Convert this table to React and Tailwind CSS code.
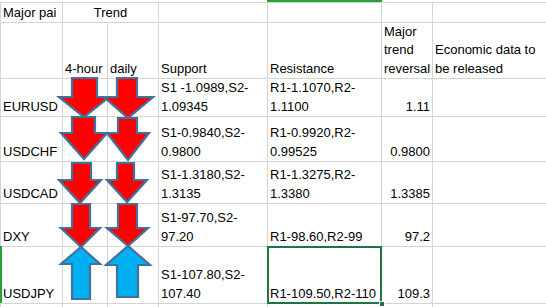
import React from 'react';

const RED = '#FF0000';
const BLUE = '#00B0F0';
const EDGE = '#41719C';

// block arrows drawn over the sheet, as in the workbook
const arrows = [
    { dir: 'down', sl: 72, sr: 97, end: 78, hy: 97, hl: 59, hr: 109, tx: 84, ty: 117 },
    { dir: 'down', sl: 72, sr: 95, end: 117, hy: 133, hl: 61, hr: 107, tx: 84, ty: 159 },
    { dir: 'down', sl: 72, sr: 91, end: 163, hy: 180, hl: 59, hr: 101, tx: 80, ty: 203 },
    { dir: 'down', sl: 72, sr: 90, end: 204, hy: 228, hl: 61, hr: 100, tx: 81, ty: 247 },
    { dir: 'up', sl: 72, sr: 90, end: 299, hy: 264, hl: 61, hr: 100, tx: 81, ty: 247 },
    { dir: 'down', sl: 117, sr: 137, end: 78, hy: 97, hl: 104, hr: 153, tx: 128, ty: 118 },
    { dir: 'down', sl: 118, sr: 137, end: 118, hy: 133, hl: 107, hr: 149, tx: 128, ty: 160 },
    { dir: 'down', sl: 117, sr: 134, end: 163, hy: 180, hl: 107, hr: 147, tx: 127, ty: 202 },
    { dir: 'down', sl: 118, sr: 137, end: 204, hy: 228, hl: 107, hr: 148, tx: 128, ty: 246 },
    { dir: 'up', sl: 117, sr: 138, end: 297, hy: 265, hl: 106, hr: 150, tx: 128, ty: 246 },
];

const rows = [
    { pair: 'EURUSD', s: ['S1 -1.0989,S2-', '1.09345'], r: ['R1-1.1070,R2-', '1.1100'], rev: '1.11' },
    { pair: 'USDCHF', s: ['S1-0.9840,S2-', '0.9800'], r: ['R1-0.9920,R2-', '0.99525'], rev: '0.9800' },
    { pair: 'USDCAD', s: ['S1-1.3180,S2-', '1.3135'], r: ['R1-1.3275,R2-', '1.3380'], rev: '1.3385' },
    { pair: 'DXY', s: ['S1-97.70,S2-', '97.20'], r: ['R1-98.60,R2-99'], rev: '97.2' },
    { pair: 'USDJPY', s: ['S1-107.80,S2-', '107.40'], r: ['R1-109.50,R2-110'], rev: '109.3', selected: true },
];

function Cell({ children, className = '' }) {
    return (
        <div className={`bg-white flex flex-col justify-end px-[2px] whitespace-nowrap overflow-hidden ${className}`}>
            {children}
        </div>
    );
}

function Arrow({ a }) {
    const fill = a.dir === 'down' ? RED : BLUE;
    const pts = [
        [a.sl, a.end], [a.sr, a.end], [a.sr, a.hy], [a.hr, a.hy],
        [a.tx, a.ty], [a.hl, a.hy], [a.sl, a.hy],
    ].map(p => p.join(',')).join(' ');
    return <polygon points={pts} fill={fill} stroke={EDGE} strokeWidth="2.2" strokeLinejoin="miter" />;
}

export default function App() {
    return (
        <div className="relative w-[546px] h-[307px] overflow-hidden bg-white pt-[2px] text-[13px] leading-[19px] text-black font-['Liberation_Sans',Arial,sans-serif]">
            <div className="grid grid-cols-[61px_44px_50px_108px_113px_50px_140px] grid-rows-[19px_55px_37px_44px_41px_42px_56px_30px] gap-px bg-[#d4d4d4] pt-px pl-px w-max">
                {/* header row 1 */}
                <Cell>Major pai</Cell>
                <Cell className="col-span-2 items-center">Trend</Cell>
                <Cell />
                <Cell />
                <Cell />
                <Cell />

                {/* header row 2 */}
                <Cell />
                <Cell>4-hour</Cell>
                <Cell>daily</Cell>
                <Cell>Support</Cell>
                <Cell>Resistance</Cell>
                <Cell className="leading-[18.5px]">
                    <span>Major</span>
                    <span>trend</span>
                    <span>reversal</span>
                </Cell>
                <Cell className="leading-[18.5px]">
                    <span>Economic data to</span>
                    <span>be released</span>
                </Cell>

                {rows.map(row => (
                    <React.Fragment key={row.pair}>
                        <Cell>{row.pair}</Cell>
                        <Cell />
                        <Cell />
                        <Cell>
                            {row.s.map(t => <span key={t}>{t}</span>)}
                        </Cell>
                        <Cell className="relative overflow-visible">
                            {row.r.map(t => <span key={t}>{t}</span>)}
                            {row.selected && (
                                <>
                                    <div className="absolute -left-px -top-px -right-px -bottom-px border-2 border-[#217346]" />
                                    <div className="absolute -right-[4px] -bottom-[4px] w-[6px] h-[6px] bg-[#217346] border border-white" />
                                </>
                            )}
                        </Cell>
                        <Cell className="items-end">{row.rev}</Cell>
                        <Cell />
                    </React.Fragment>
                ))}

                {/* next empty row */}
                <Cell />
                <Cell />
                <Cell />
                <Cell />
                <Cell />
                <Cell />
                <Cell />
            </div>

            {/* column / row selection highlights */}
            <div className="absolute top-0 left-[267px] w-[115px] h-[2px] bg-[#21a33a]" />
            <div className="absolute left-0 top-[246px] w-[2px] h-[57px] bg-[#21a33a]" />

            <svg className="absolute inset-0 pointer-events-none" width="546" height="307" viewBox="0 0 546 307">
                {arrows.map((a, i) => <Arrow key={i} a={a} />)}
            </svg>
        </div>
    );
}
